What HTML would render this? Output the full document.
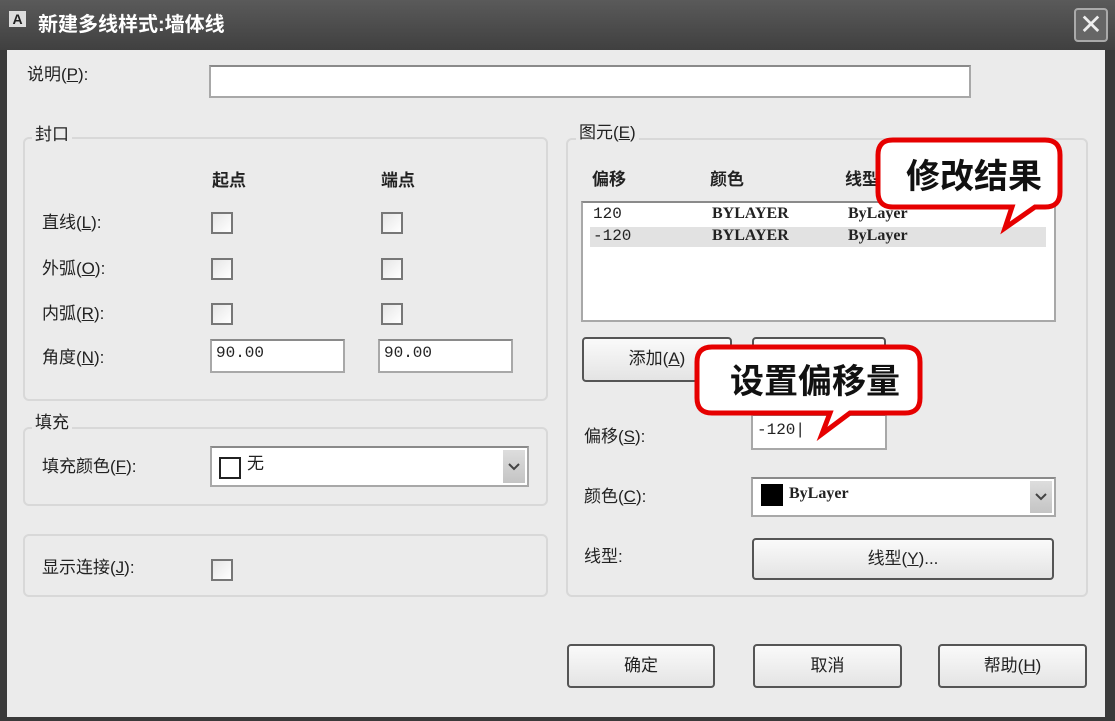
<!DOCTYPE html>
<html><head><meta charset="utf-8"><style>
*{margin:0;padding:0;box-sizing:border-box}
body{width:1115px;height:721px;background:#3a3a3a;position:relative;overflow:hidden;font-family:"Liberation Sans","Noto Sans CJK SC",sans-serif;font-size:17px;color:#222}
.a{position:absolute}
.t{position:absolute;white-space:nowrap;line-height:20px}
.grp{position:absolute;border:2px solid #d8d8d8;border-radius:6px}
.inp{position:absolute;background:#fff;border:2px solid #a8a8a8;border-top-color:#8a8a8a}
.cb{position:absolute;width:22px;height:22px;border:2px solid #777;background:linear-gradient(135deg,#e6e6e6,#fff)}
.btn{position:absolute;border:2px solid #555;border-radius:4px;background:linear-gradient(#fafafa,#e4e4e4);text-align:center;font-size:17px}
.mono{font-family:"Liberation Mono","DejaVu Sans Mono",monospace}
.serif{font-family:"Liberation Serif",serif;font-weight:bold}
.dd{position:absolute;right:2px;top:2px;bottom:2px;width:22px;background:linear-gradient(#ddd,#c4c4c4)}
.dd svg{position:absolute;left:5px;top:50%;margin-top:-4px}
</style></head><body>
<div class="a" style="left:0;top:0;width:1115px;height:50px;background:linear-gradient(#5a5a5a,#404040)"></div>
<div class="a" style="left:9px;top:11px;width:17px;height:16px;background:#ddd;color:#222;font-size:14px;font-weight:bold;text-align:center;line-height:16px">A</div>
<div class="t" style="left:38px;top:13px;color:#fff;font-weight:bold;font-size:20px;line-height:24px">新建多线样式:墙体线</div>
<div class="a" style="left:1074px;top:8px;width:34px;height:34px;border:2px solid #aaa;border-radius:4px;background:#666;color:#eee;font-size:28px;text-align:center;line-height:30px">✕</div>
<div class="a" style="left:7px;top:50px;width:1098px;height:667px;background:#ebebeb"></div>

<div class="t" style="left:27px;top:65px">说明(<u>P</u>):</div>
<div class="inp" style="left:209px;top:65px;width:762px;height:33px"></div>

<div class="grp" style="left:23px;top:137px;width:525px;height:264px"></div>
<div class="t" style="left:32px;top:125px;background:#ebebeb;padding:0 3px">封口</div>
<div class="t" style="left:212px;top:171px;font-weight:bold">起点</div>
<div class="t" style="left:381px;top:171px;font-weight:bold">端点</div>
<div class="t" style="left:42px;top:213px">直线(<u>L</u>):</div>
<div class="t" style="left:42px;top:259px">外弧(<u>O</u>):</div>
<div class="t" style="left:42px;top:304px">内弧(<u>R</u>):</div>
<div class="t" style="left:42px;top:348px">角度(<u>N</u>):</div>
<div class="cb" style="left:211px;top:212px"></div><div class="cb" style="left:381px;top:212px"></div>
<div class="cb" style="left:211px;top:258px"></div><div class="cb" style="left:381px;top:258px"></div>
<div class="cb" style="left:211px;top:303px"></div><div class="cb" style="left:381px;top:303px"></div>
<div class="inp mono" style="left:210px;top:339px;width:135px;height:34px;padding:3px 4px;font-size:16px">90.00</div>
<div class="inp mono" style="left:378px;top:339px;width:135px;height:34px;padding:3px 4px;font-size:16px">90.00</div>

<div class="grp" style="left:23px;top:427px;width:525px;height:79px"></div>
<div class="t" style="left:32px;top:413px;background:#ebebeb;padding:0 3px">填充</div>
<div class="t" style="left:42px;top:457px">填充颜色(<u>F</u>):</div>
<div class="inp" style="left:210px;top:446px;width:319px;height:41px">
<div class="a" style="left:7px;top:9px;width:22px;height:22px;border:2px solid #222"></div>
<div class="t" style="left:35px;top:6px">无</div><div class="dd"><svg width="12" height="8"><path d="M1,1 L6,6 L11,1" fill="none" stroke="#444" stroke-width="2"/></svg></div></div>

<div class="grp" style="left:23px;top:534px;width:525px;height:63px"></div>
<div class="t" style="left:42px;top:558px">显示连接(<u>J</u>):</div>
<div class="cb" style="left:211px;top:559px"></div>

<div class="grp" style="left:566px;top:138px;width:522px;height:459px"></div>
<div class="t" style="left:576px;top:123px;background:#ebebeb;padding:0 3px">图元(<u>E</u>)</div>
<div class="t" style="left:592px;top:170px;font-weight:bold">偏移</div>
<div class="t" style="left:710px;top:170px;font-weight:bold">颜色</div>
<div class="t" style="left:845px;top:170px;font-weight:bold">线型</div>
<div class="inp" style="left:581px;top:201px;width:475px;height:121px"></div>
<div class="a" style="left:590px;top:227px;width:456px;height:20px;background:#e2e2e2"></div>
<div class="t mono" style="left:593px;top:204px;font-size:16px">120</div>
<div class="t mono" style="left:593px;top:226px;font-size:16px">-120</div>
<div class="t serif" style="left:712px;top:204px;font-size:16px">BYLAYER</div>
<div class="t serif" style="left:712px;top:226px;font-size:16px">BYLAYER</div>
<div class="t serif" style="left:848px;top:204px;font-size:16px">ByLayer</div>
<div class="t serif" style="left:848px;top:226px;font-size:16px">ByLayer</div>
<div class="btn" style="left:582px;top:337px;width:150px;height:45px;line-height:40px">添加(<u>A</u>)</div>
<div class="btn" style="left:752px;top:337px;width:134px;height:45px"></div>
<div class="t" style="left:584px;top:427px">偏移(<u>S</u>):</div>
<div class="inp mono" style="left:751px;top:414px;width:136px;height:36px;padding:5px 4px;font-size:16px">-120|</div>
<div class="t" style="left:584px;top:487px">颜色(<u>C</u>):</div>
<div class="inp" style="left:751px;top:477px;width:305px;height:40px">
<div class="a" style="left:8px;top:5px;width:22px;height:22px;background:#000"></div>
<div class="t serif" style="left:36px;top:5px;font-size:16px">ByLayer</div><div class="dd"><svg width="12" height="8"><path d="M1,1 L6,6 L11,1" fill="none" stroke="#444" stroke-width="2"/></svg></div></div>
<div class="t" style="left:584px;top:547px">线型:</div>
<div class="btn" style="left:752px;top:538px;width:302px;height:42px;line-height:38px">线型(<u>Y</u>)...</div>

<div class="btn" style="left:567px;top:644px;width:148px;height:44px;line-height:40px">确定</div>
<div class="btn" style="left:753px;top:644px;width:149px;height:44px;line-height:40px">取消</div>
<div class="btn" style="left:938px;top:644px;width:149px;height:44px;line-height:40px">帮助(<u>H</u>)</div>

<svg class="a" style="left:0;top:0" width="1115" height="721">
<path d="M893,140 H1045 Q1060,140 1060,155 V192 Q1060,207 1045,207 H1035 L1005,228 L1012,207 H893 Q878,207 878,192 V155 Q878,140 893,140 Z" fill="#fff" stroke="#e60000" stroke-width="5"/>
<path d="M712,347 H905 Q920,347 920,362 V398 Q920,413 905,413 H850 L822,434 L830,413 H712 Q697,413 697,398 V362 Q697,347 712,347 Z" fill="#fff" stroke="#e60000" stroke-width="5"/>
</svg>
<div class="t" style="left:906px;top:157px;font-size:34px;line-height:40px;font-weight:bold;color:#111">修改结果</div>
<div class="t" style="left:730px;top:362px;font-size:34px;line-height:40px;font-weight:bold;color:#111">设置偏移量</div>
</body></html>
